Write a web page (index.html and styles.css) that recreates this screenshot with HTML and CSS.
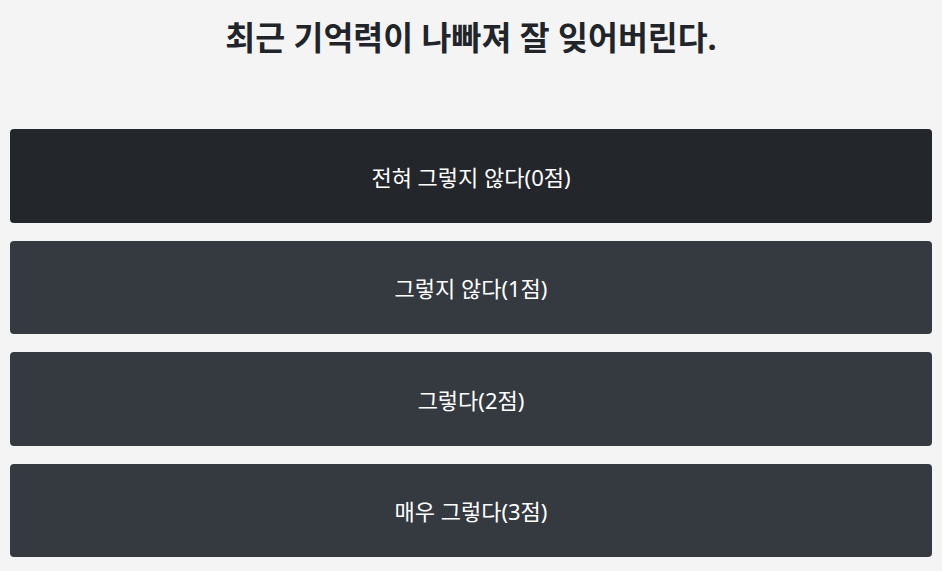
FILE: index.html
```html
<!DOCTYPE html>
<html lang="ko">
<head>
  <meta charset="UTF-8">
  <title>기억력 설문</title>
  <link rel="stylesheet" href="styles.css">
</head>
<body>
  <div class="quiz">
    <h2 class="question">최근 기억력이 나빠져 잘 잊어버린다.</h2>
    <div class="answers">
      <button class="answer active">전혀 그렇지 않다(0점)</button>
      <button class="answer">그렇지 않다(1점)</button>
      <button class="answer">그렇다(2점)</button>
      <button class="answer">매우 그렇다(3점)</button>
    </div>
  </div>
</body>
</html>
```
FILE: styles.css
```css
body {
  margin: 0;
  background: #f4f4f4;
  color: #212529;
  font-family: "Noto Sans", "Noto Sans CJK KR", sans-serif;
}

.quiz {
  padding: 0 10px;
}

.question {
  margin: 0;
  padding-top: 16px;
  height: 129px;
  box-sizing: border-box;
  text-align: center;
  font-size: 32.5px;
  font-weight: 700;
  line-height: 44px;
}

.answers {
  display: flex;
  flex-direction: column;
  gap: 18px;
}

.answer {
  height: 93.5px;
  border: 0;
  border-radius: 4px;
  background: #343a40;
  color: #fff;
  font-family: inherit;
  font-size: 22px;
  cursor: pointer;
}

.answer.active {
  background: #23272b;
}
```
